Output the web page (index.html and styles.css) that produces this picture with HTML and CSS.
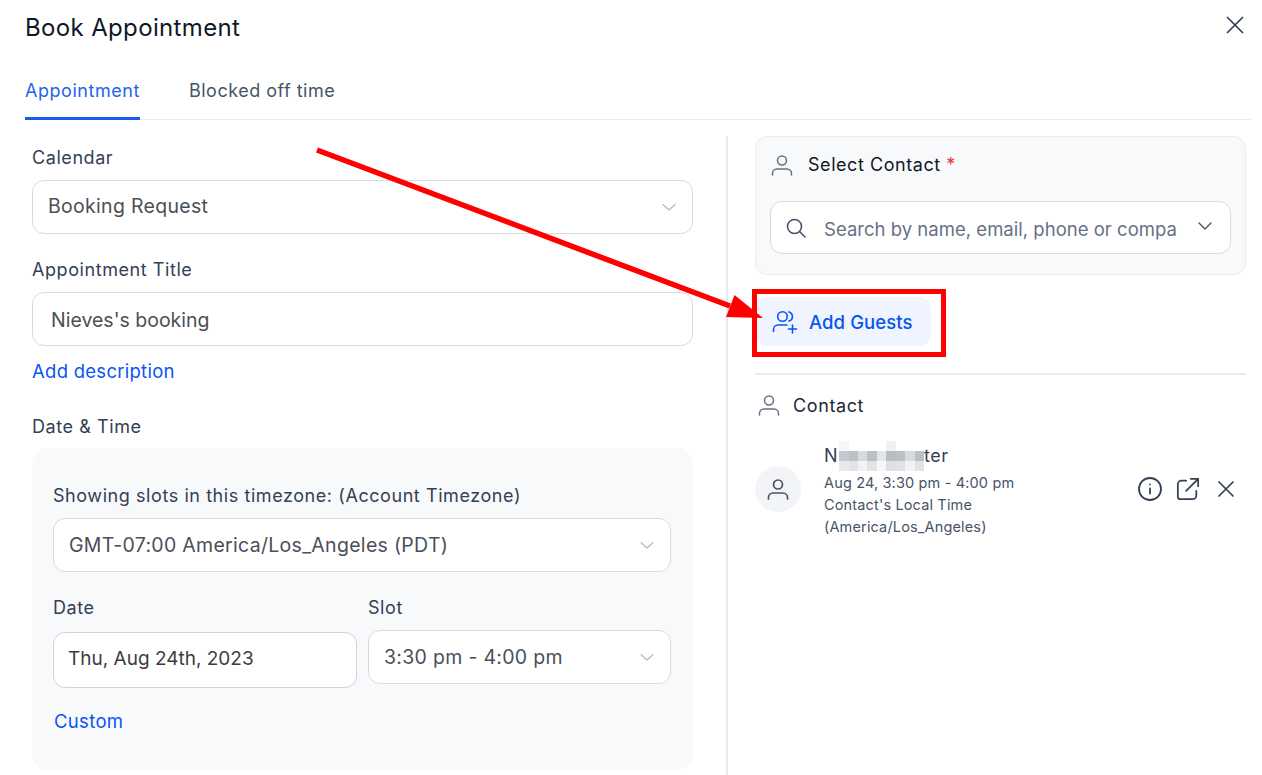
FILE: index.html
```html
<!DOCTYPE html>
<html lang="en">
<head>
<meta charset="utf-8">
<title>Book Appointment</title>
<link rel="stylesheet" href="styles.css">
</head>
<body>
<div class="modal">
  <header class="head">
    <h1 class="title">Book Appointment</h1>
    <svg class="close" width="24" height="24" viewBox="0 0 24 24" fill="none" stroke="#344054" stroke-width="1.7" stroke-linecap="round"><path d="M4.5 4.5l15 15M19.5 4.5l-15 15"/></svg>
  </header>
  <nav class="tabs">
    <span class="tab active">Appointment</span>
    <span class="tab">Blocked off time</span>
  </nav>
  <div class="cols">
    <section class="left">
      <div class="label first">Calendar</div>
      <div class="select top"><span>Booking Request</span><svg class="chev" width="16" height="16" viewBox="0 0 16 16" fill="none" stroke="#b4b9c3" stroke-width="1.2" stroke-linecap="round" stroke-linejoin="round"><path d="M2 5.5l6 5.5 6-5.5"/></svg></div>
      <div class="label">Appointment Title</div>
      <div class="select wide"><span>Nieves's booking</span></div>
      <div class="link add-desc">Add description</div>
      <div class="label dt">Date &amp; Time</div>
      <div class="panel">
        <div class="label tz">Showing slots in this timezone: (Account Timezone)</div>
        <div class="select"><span>GMT-07:00 America/Los_Angeles (PDT)</span><svg class="chev" width="16" height="16" viewBox="0 0 16 16" fill="none" stroke="#b4b9c3" stroke-width="1.2" stroke-linecap="round" stroke-linejoin="round"><path d="M2 5.5l6 5.5 6-5.5"/></svg></div>
        <div class="pair">
          <div class="date-col">
            <div class="label p">Date</div>
            <div class="date-input">Thu, Aug 24th, 2023</div>
          </div>
          <div class="slot-col">
            <div class="label p">Slot</div>
            <div class="select"><span>3:30 pm - 4:00 pm</span><svg class="chev" width="16" height="16" viewBox="0 0 16 16" fill="none" stroke="#b4b9c3" stroke-width="1.2" stroke-linecap="round" stroke-linejoin="round"><path d="M2 5.5l6 5.5 6-5.5"/></svg></div>
          </div>
        </div>
        <div class="link custom">Custom</div>
      </div>
    </section>
    <section class="right">
      <div class="card">
        <div class="card-head">
          <svg class="user" width="24" height="24" viewBox="0 0 24 24" fill="none" stroke="#667085" stroke-width="1.5" stroke-linecap="round" stroke-linejoin="round"><circle cx="12" cy="7.5" r="4.5"/><path d="M2.5 22v-1.500a4.500 4.500 0 0 1 4.500-4.500h10a4.500 4.500 0 0 1 4.500 4.500V22"/></svg>
          <span class="card-title">Select Contact <b class="req">*</b></span>
        </div>
        <div class="search">
          <svg class="mag" width="22" height="22" viewBox="0 0 22 22" fill="none" stroke="#475467" stroke-width="1.6" stroke-linecap="round" stroke-linejoin="round"><circle cx="9.500" cy="9.500" r="7"/><path d="M14.800 14.800l5.200 5.200"/></svg>
          <span class="ph">Search by name, email, phone or company</span>
          <svg class="chev2" width="16" height="16" viewBox="0 0 16 16" fill="none" stroke="#475467" stroke-width="1.4" stroke-linecap="round" stroke-linejoin="round"><path d="M2 5l6 6 6-6"/></svg>
        </div>
      </div>
      <div class="guests">
        <svg width="26" height="26" viewBox="0 0 26 26" fill="none" stroke="#0a55f0" stroke-width="1.6" stroke-linecap="round" stroke-linejoin="round"><circle cx="10.500" cy="7.500" r="4.800"/><path d="M17 2.900a4.800 4.800 0 0 1 0 9.200M1.500 22.500v-2a4.500 4.500 0 0 1 4.500-4.500h9M20.500 16v8M16.500 20h8"/></svg>
        <span>Add Guests</span>
      </div>
      <div class="rule"></div>
      <div class="contact-head">
        <svg class="user" width="24" height="24" viewBox="0 0 24 24" fill="none" stroke="#667085" stroke-width="1.500" stroke-linecap="round" stroke-linejoin="round"><circle cx="12" cy="7.500" r="4.500"/><path d="M2.500 22v-1.500a4.500 4.500 0 0 1 4.500-4.500h10a4.500 4.500 0 0 1 4.500 4.500V22"/></svg>
        <span>Contact</span>
      </div>
      <div class="contact">
        <div class="avatar"><svg width="24" height="24" viewBox="0 0 24 24" fill="none" stroke="#475467" stroke-width="1.700" stroke-linecap="round" stroke-linejoin="round"><circle cx="12" cy="7.500" r="4.500"/><path d="M2.500 22v-1.500a4.500 4.500 0 0 1 4.500-4.500h10a4.500 4.500 0 0 1 4.500 4.500V22"/></svg></div>
        <div class="info">
          <div class="name">N<span class="blur"><i class="b1"></i><i class="b2"></i><i class="b3"></i><i class="b2"></i><i class="b4"></i><i class="b5"></i><i class="b2"></i><i class="b3"></i><i class="b2"></i></span>ter</div>
          <div class="meta">Aug 24, 3:30 pm - 4:00 pm</div>
          <div class="meta">Contact's Local Time</div>
          <div class="meta">(America/Los_Angeles)</div>
        </div>
        <div class="actions">
          <svg width="26" height="26" viewBox="0 0 26 26" fill="none" stroke="#344054" stroke-width="1.800" stroke-linecap="round" stroke-linejoin="round"><circle cx="13" cy="13" r="11"/><path d="M13 12.500v5M13 8.500v.01"/></svg>
          <svg width="24" height="24" viewBox="0 0 26 26" fill="none" stroke="#344054" stroke-width="1.900" stroke-linecap="round" stroke-linejoin="round"><path d="M11 4H6a4 4 0 0 0-4 4v13a3 3 0 0 0 3 3h13a4 4 0 0 0 4-4v-5M16 2h8v8M24 2L11 15"/></svg>
          <svg width="24" height="24" viewBox="0 0 24 24" fill="none" stroke="#344054" stroke-width="1.700" stroke-linecap="round"><path d="M5 5l14 14M19 5L5 19"/></svg>
        </div>
      </div>
    </section>
  </div>
</div>
<div class="redbox"></div>
<svg class="arrow" width="1262" height="775" viewBox="0 0 1262 775"><path d="M317 150L730 306" stroke="#ff0000" stroke-width="5.500" fill="none"/><path d="M763 318L726 317L734.500 295Z" fill="#ff0000"/></svg>
</body>
</html>
```
FILE: styles.css
```css
* { box-sizing: border-box; }
html, body { margin: 0; height: 775px; overflow: hidden; background: #fff; }
body { font-family: Inter, "Liberation Sans", sans-serif; color: #344054; position: relative; }
.modal { padding: 0 11px 0 25px; height: 775px; overflow: hidden; }
.head { display: flex; justify-content: space-between; align-items: center; height: 55px; padding-right: 4px; }
.title { margin: 0; font-size: 24px; letter-spacing: 0.35px; font-weight: 400; color: #101828; line-height: 28px; }
.close { margin-bottom: 5px; }
.tabs { display: flex; gap: 49px; height: 65px; border-bottom: 1px solid #eaecf0; padding-top: 25px; }
.tab { font-size: 18px; letter-spacing: 0.5px; line-height: 22px; height: 40px; color: #475467; }
.tab.active { color: #2563eb; letter-spacing: 0.55px; border-bottom: 3px solid #155eef; }
.cols { display: flex; margin-top: 16px; }
.left { width: 703px; padding: 0 33px 0 7px; border-right: 2px solid #e8eaef; height: 640px; flex: none; }
.label { font-size: 18px; letter-spacing: 0.57px; line-height: 22px; color: #344054; }
.label.first { margin-top: 11px; margin-bottom: 11px; }
.select { height: 54px; border: 1px solid #d8dbe3; border-radius: 12px; background: #fff; display: flex; align-items: center; justify-content: space-between; padding: 0 15px; font-size: 19.500px; letter-spacing: 0.3px; color: #4b4f58; }
.select.top span { margin-bottom: 3px; }
.select + .label { margin-top: 25px; margin-bottom: 11px; }
.select.wide { padding-left: 18px; letter-spacing: 0; }
.select.wide span { margin-top: 2px; }
.link { font-size: 18.500px; line-height: 22px; color: #0a55f0; }
.add-desc { margin-top: 14px; letter-spacing: 0.27px; }
.label.dt { margin-top: 34px; margin-bottom: 10px; }
.panel { background: #f8f9fb; border-radius: 16px; height: 322px; padding: 37px 22px 0 21px; }
.label.tz { margin-bottom: 11px; }
.pair { display: flex; gap: 11px; margin-top: 25px; }
.date-col { width: 304px; }
.slot-col { flex: 1; }
.label.p { margin-bottom: 11px; }
.date-input { height: 56px; margin-top: 13px; border: 1px solid #cdd1dc; border-radius: 12px; background: #fff; padding: 0 14px 4px; display: flex; align-items: center; font-size: 19px; color: #3b3d42; }
.date-col .label.p { margin-bottom: 0; }
.custom { margin-top: 22px; margin-left: 1px; letter-spacing: 0.33px; }
.right { flex: none; width: 518px; padding-left: 27px; }
.card { height: 139px; border: 1px solid #eaecf0; border-radius: 12px; background: #f8f9fb; padding: 14px 14px 0; }
.card-head { display: flex; align-items: center; gap: 14px; height: 28px; }
.card-title { font-size: 18px; letter-spacing: 0.55px; color: #101828; margin-bottom: 2px; }
.req { font-weight: 400; color: #e53935; }
.search { margin-top: 22px; height: 53px; border: 1px solid #d8dbe3; border-radius: 12px; background: #fff; display: flex; align-items: center; padding: 0 17px 0 14px; }
.mag { flex: none; }
.ph { flex: 1; min-width: 0; margin: 2px 20px 0 17px; font-size: 18.500px; letter-spacing: 0.02px; color: #667085; white-space: nowrap; overflow: hidden; }
.chev2 { flex: none; margin-bottom: 4px; }
.guests { margin-top: 22px; width: 176px; height: 49px; border-radius: 12px; background: #eff4ff; display: flex; align-items: center; gap: 11px; padding-left: 17px; font-size: 18.500px; letter-spacing: 0.1px; font-weight: 500; color: #0a55f0; }
.rule { margin-top: 27px; height: 2px; background: #e8eaef; }
.contact-head { display: flex; align-items: center; gap: 12.500px; margin-top: 16px; height: 28px; padding-left: 1.500px; font-size: 18px; letter-spacing: 0.6px; color: #1d2939; }
.contact { display: flex; align-items: center; margin-top: 26px; }
.avatar { width: 46px; height: 46px; border-radius: 50%; background: #f2f4f7; display: flex; align-items: center; justify-content: center; flex: none; margin-bottom: 6px; }
.info { margin-left: 23px; flex: 1; }
.name { font-size: 18px; letter-spacing: 0.5px; line-height: 22px; color: #344054; height: 22px; display: flex; align-items: center; margin-bottom: 5px; }
.blur { display: inline-flex; height: 30px; width: 85px; margin-left: 1px; }
.blur i { flex: 1; height: 100%; }
.b1 { background: linear-gradient(#f6f7f8 0 33%, #c4c7cd 33% 66%, #e8e9ec 66%); }
.b2 { background: linear-gradient(#fff 0 33%, #bcbfc7 33% 66%, #e2e3e7 66%); }
.b3 { background: linear-gradient(#fff 0 33%, #d8dade 33% 66%, #f1f2f4 66%); }
.b4 { background: linear-gradient(#fff 0 33%, #e4e5e8 33% 66%, #f6f7f8 66%); }
.b5 { background: linear-gradient(#f0f1f3 0 33%, #b9bcc3 33% 66%, #dfe0e4 66%); }
.meta { font-size: 14.500px; letter-spacing: 0.15px; line-height: 22px; color: #475467; }
.actions { display: flex; align-items: center; gap: 13.500px; padding-right: 8.500px; margin-bottom: 6px; }
.redbox { position: absolute; left: 752px; top: 289px; width: 194px; height: 68px; border: 5px solid #ff0000; }
.arrow { position: absolute; left: 0; top: 0; pointer-events: none; }
```
